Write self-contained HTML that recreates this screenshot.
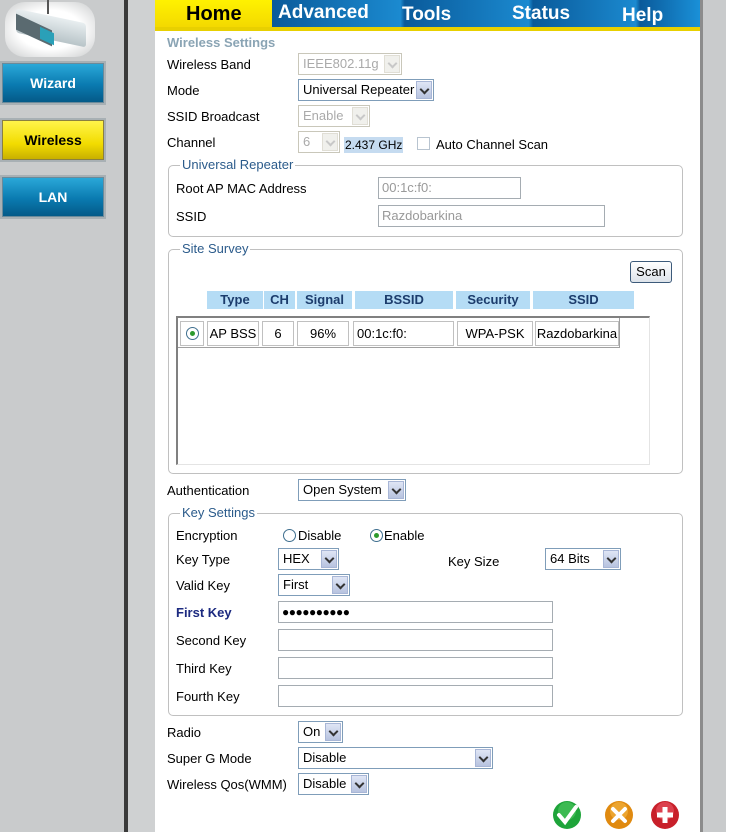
<!DOCTYPE html>
<html><head><meta charset="utf-8"><style>
*{box-sizing:border-box;margin:0;padding:0}
body{width:753px;height:832px;position:relative;overflow:hidden;background:#fff;font-family:"Liberation Sans",Arial,sans-serif;font-size:13px;color:#000}
.a{position:absolute}
.t{position:absolute;white-space:nowrap;line-height:16px;margin-top:1px}
.sel{position:absolute;border:1px solid #7f9db9;background:#fff;height:22px;line-height:20px;padding-left:4px;white-space:nowrap;overflow:hidden}
.sel .ar{position:absolute;right:1px;top:1px;width:16px;height:18px;background:linear-gradient(#dfe5f5,#b7c3df);border:1px solid #a8b6d6}
.sel .ar:after{content:"";position:absolute;left:4px;top:4px;width:5px;height:5px;border-right:2px solid #333;border-bottom:2px solid #333;transform:rotate(45deg)}
.dis{border-color:#c9c7ba;color:#aaa}
.dis .ar{background:#f0f0ec;border-color:#e0ded5}
.dis .ar:after{border-color:#c8c8c8}
.inp{position:absolute;border:1px solid #a5acb2;background:#fff;height:22px;line-height:20px;padding-left:3px;white-space:nowrap}
.fs{position:absolute;border:1px solid #c0c0c0;border-radius:5px}
.lg{position:absolute;background:#fff;color:#2b5b8b;padding:0 2px;line-height:16px;white-space:nowrap}
.hd{position:absolute;top:291px;height:18px;background:#b5dcf5;color:#1c3c6c;font-weight:bold;text-align:center;line-height:18px}
.c{position:absolute;top:321px;height:25px;border:1px solid #c0c0c0;text-align:center;line-height:23px;white-space:nowrap}
.rad{position:absolute;width:13px;height:13px;border-radius:50%;border:1px solid #3f6f8f;background:#fff}
.rad.on:after{content:"";position:absolute;left:3px;top:3px;width:5px;height:5px;border-radius:50%;background:#2d9a2d}
.btn{position:absolute;left:2px;width:102px;height:40px;border:1px solid #6a8a9a;color:#fff;font-weight:bold;font-size:14px;text-align:center;line-height:38px;background:linear-gradient(#2aa8d8,#0a7ab0 55%,#045a88);box-shadow:0 0 0 2px #a8b0b4}
</style></head><body>
<div class="a" style="left:0;top:0;width:124px;height:832px;background:#c9cbcc"></div>
<div class="a" style="left:124px;top:0;width:4px;height:832px;background:#3a3a3a"></div>
<div class="a" style="left:128px;top:0;width:27px;height:832px;background:#cfd1d2"></div>
<div class="a" style="left:700px;top:0;width:3px;height:832px;background:#8c8c8c"></div>
<div class="a" style="left:703px;top:0;width:23px;height:832px;background:#c9cbcc"></div>
<div class="a" style="left:5px;top:2px;width:90px;height:55px;border-radius:20px;background:radial-gradient(#fff 50%,#c9cbcc)"></div>
<div class="a" style="left:47px;top:0;width:2px;height:14px;background:#555"></div>
<div class="a" style="left:16px;top:16px;width:70px;height:24px;background:linear-gradient(#e8eef0,#b8c4c8);transform:skewY(12deg);border-radius:3px"></div>
<div class="a" style="left:16px;top:22px;width:36px;height:16px;background:#5a6a70;transform:skewY(25deg)"></div>
<div class="a" style="left:40px;top:30px;width:14px;height:12px;background:#2aa0b8;transform:skewY(25deg)"></div>
<div class="btn" style="top:63px">Wizard</div>
<div class="btn" style="top:120px;color:#000;background:linear-gradient(#fff44a,#f2dc00 60%,#c8b000);border-color:#8a8040">Wireless</div>
<div class="btn" style="top:177px">LAN</div>
<div class="a" style="left:155px;top:0;width:117px;height:28px;background:linear-gradient(#fff200,#f3d800)"></div>
<div class="a" style="left:272px;top:0;width:428px;height:28px;background:linear-gradient(90deg,#0a5a9a,#1b8ad0 30%,#0a5a9a 31%,#1b8ad0 60%,#0a5a9a 61%,#1b8ad0 85%,#0a5a9a 86%,#1a90d8)"></div>
<div class="a" style="left:155px;top:27px;width:545px;height:4px;background:#e8d000"></div>
<div class="t" style="left:186px;top:2px;font-size:20px;line-height:22px;font-weight:bold">Home</div>
<div class="t" style="left:278px;top:1px;font-size:19px;line-height:22px;font-weight:bold;color:#fff">Advanced</div>
<div class="t" style="left:402px;top:3px;font-size:19px;line-height:22px;font-weight:bold;color:#fff">Tools</div>
<div class="t" style="left:512px;top:2px;font-size:19px;line-height:22px;font-weight:bold;color:#fff">Status</div>
<div class="t" style="left:622px;top:4px;font-size:19px;line-height:22px;font-weight:bold;color:#fff">Help</div>
<div class="t" style="left:167px;top:34px;font-weight:bold;color:#8aa4b4">Wireless Settings</div>
<div class="t" style="left:167px;top:56px">Wireless Band</div>
<div class="sel dis" style="left:298px;top:53px;width:104px">IEEE802.11g<div class="ar"></div></div>
<div class="t" style="left:167px;top:82px">Mode</div>
<div class="sel" style="left:298px;top:79px;width:136px">Universal Repeater<div class="ar"></div></div>
<div class="t" style="left:167px;top:108px">SSID Broadcast</div>
<div class="sel dis" style="left:298px;top:105px;width:72px">Enable<div class="ar"></div></div>
<div class="t" style="left:167px;top:134px">Channel</div>
<div class="sel dis" style="left:298px;top:131px;width:42px">6<div class="ar"></div></div>
<div class="t" style="left:344px;top:136px;background:#c5dbf0;font-size:12px;padding:0 1px">2.437 GHz</div>
<div class="a" style="left:417px;top:137px;width:13px;height:13px;border:1px solid #b8c4d0;background:#fff"></div>
<div class="t" style="left:436px;top:136px">Auto Channel Scan</div>
<div class="fs" style="left:168px;top:165px;width:515px;height:72px"></div>
<div class="lg" style="left:180px;top:157px">Universal Repeater</div>
<div class="t" style="left:176px;top:180px">Root AP MAC Address</div>
<div class="inp" style="left:378px;top:177px;width:143px;color:#999">00:1c:f0:</div>
<div class="t" style="left:176px;top:208px">SSID</div>
<div class="inp" style="left:378px;top:205px;width:227px;color:#999">Razdobarkina</div>
<div class="fs" style="left:168px;top:249px;width:515px;height:225px"></div>
<div class="lg" style="left:180px;top:241px">Site Survey</div>
<div class="a" style="left:630px;top:261px;width:42px;height:22px;border:1px solid #3c5a7a;border-radius:3px;background:linear-gradient(#fff,#dde3ea);text-align:center;line-height:20px">Scan</div>
<div class="hd" style="left:207px;width:56px">Type</div>
<div class="hd" style="left:264px;width:31px">CH</div>
<div class="hd" style="left:297px;width:55px">Signal</div>
<div class="hd" style="left:355px;width:98px">BSSID</div>
<div class="hd" style="left:456px;width:74px">Security</div>
<div class="hd" style="left:533px;width:101px">SSID</div>
<div class="a" style="left:176px;top:316px;width:474px;height:149px;border-top:2px solid #808080;border-left:2px solid #808080;border-right:1px solid #e4e4e4;border-bottom:1px solid #e4e4e4"></div>
<div class="a" style="left:178px;top:318px;width:442px;height:30px;border-right:1px solid #a0a0a0;border-bottom:1px solid #a0a0a0"></div>
<div class="c" style="left:180px;width:24px"></div>
<div class="rad on" style="left:186px;top:327px"></div>
<div class="c" style="left:207px;width:52px">AP BSS</div>
<div class="c" style="left:262px;width:32px">6</div>
<div class="c" style="left:297px;width:52px">96%</div>
<div class="c" style="left:353px;width:101px;text-align:left;padding-left:3px">00:1c:f0:</div>
<div class="c" style="left:457px;width:76px">WPA-PSK</div>
<div class="c" style="left:535px;width:84px">Razdobarkina</div>
<div class="t" style="left:167px;top:482px">Authentication</div>
<div class="sel" style="left:298px;top:479px;width:108px">Open System<div class="ar"></div></div>
<div class="fs" style="left:168px;top:513px;width:515px;height:203px"></div>
<div class="lg" style="left:180px;top:505px">Key Settings</div>
<div class="t" style="left:176px;top:527px">Encryption</div>
<div class="rad" style="left:283px;top:529px"></div>
<div class="t" style="left:298px;top:527px">Disable</div>
<div class="rad on" style="left:370px;top:529px"></div>
<div class="t" style="left:384px;top:527px">Enable</div>
<div class="t" style="left:176px;top:551px">Key Type</div>
<div class="sel" style="left:278px;top:548px;width:61px">HEX<div class="ar"></div></div>
<div class="t" style="left:448px;top:553px">Key Size</div>
<div class="sel" style="left:545px;top:548px;width:76px">64 Bits<div class="ar"></div></div>
<div class="t" style="left:176px;top:577px">Valid Key</div>
<div class="sel" style="left:278px;top:574px;width:72px">First<div class="ar"></div></div>
<div class="t" style="left:176px;top:604px;font-weight:bold;color:#1c2a80">First Key</div>
<div class="inp" style="left:278px;top:601px;width:275px;font-size:12px;font-weight:bold;letter-spacing:-0.5px">●●●●●●●●●●</div>
<div class="t" style="left:176px;top:632px">Second Key</div>
<div class="inp" style="left:278px;top:629px;width:275px"></div>
<div class="t" style="left:176px;top:660px">Third Key</div>
<div class="inp" style="left:278px;top:657px;width:275px"></div>
<div class="t" style="left:176px;top:688px">Fourth Key</div>
<div class="inp" style="left:278px;top:685px;width:275px"></div>
<div class="t" style="left:167px;top:724px">Radio</div>
<div class="sel" style="left:298px;top:721px;width:45px">On<div class="ar"></div></div>
<div class="t" style="left:167px;top:750px">Super G Mode</div>
<div class="sel" style="left:298px;top:747px;width:195px">Disable<div class="ar"></div></div>
<div class="t" style="left:167px;top:776px">Wireless Qos(WMM)</div>
<div class="sel" style="left:298px;top:773px;width:71px">Disable<div class="ar"></div></div>
<svg class="a" style="left:550px;top:799px" width="130" height="33" viewBox="0 0 130 33">
<circle cx="17" cy="16" r="14" fill="#1ea43a"/><circle cx="17" cy="12" r="9" fill="#5ad06a" opacity=".5"/>
<path d="M9 16 L15 23 L26 8" stroke="#fff" stroke-width="4" fill="none" stroke-linecap="round"/>
<circle cx="69" cy="16" r="14" fill="#e08a10"/><circle cx="69" cy="12" r="9" fill="#f8c050" opacity=".5"/>
<path d="M63 10 L75 22 M75 10 L63 22" stroke="#fff" stroke-width="4" stroke-linecap="round"/>
<circle cx="115" cy="16" r="14" fill="#c8202a"/><circle cx="115" cy="12" r="9" fill="#f06070" opacity=".5"/>
<path d="M115 8 V24 M107 16 H123" stroke="#fff" stroke-width="5"/>
</svg>
</body></html>
